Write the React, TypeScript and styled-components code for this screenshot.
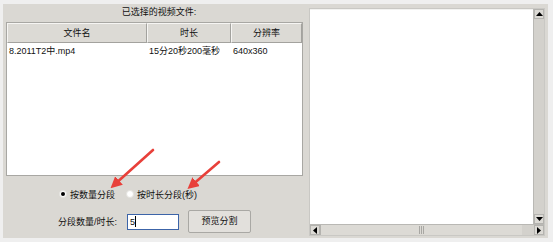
import React from "react";
import styled, { createGlobalStyle } from "styled-components";

const GlobalStyle = createGlobalStyle`
  html, body {
    margin: 0;
    padding: 0;
    background: #efefef;
    font-family: "Liberation Sans", "Noto Sans CJK SC", sans-serif;
    font-size: 9px;
    color: #111;
  }
`;

const files = [{ name: "8.2011T2中.mp4", duration: "15分20秒200毫秒", size: "640x360" }];

const columns = [
  { title: "文件名", width: 140 },
  { title: "时长", width: 84 },
  { title: "分辨率", width: 71 },
];

const App = () => {
  return (
    <Page>
      <GlobalStyle />
      <Panel>
        <LeftColumn>
          <Title>已选择的视频文件:</Title>
          <TableBox>
            <HeaderRow>
              {columns.map((c) => (
                <HeaderCell key={c.title} style={{ width: c.width }}>
                  {c.title}
                </HeaderCell>
              ))}
            </HeaderRow>
            {files.map((f) => (
              <DataRow key={f.name}>
                <DataCell style={{ width: columns[0].width }}>{f.name}</DataCell>
                <DataCell style={{ width: columns[1].width }}>{f.duration}</DataCell>
                <DataCell style={{ width: columns[2].width }}>{f.size}</DataCell>
              </DataRow>
            ))}
          </TableBox>
          <RadioRow>
            <RadioLabel>
              <Radio checked />
              按数量分段
            </RadioLabel>
            <RadioLabel>
              <Radio />
              按时长分段(秒)
            </RadioLabel>
          </RadioRow>
          <InputRow>
            <FieldLabel>分段数量/时长:</FieldLabel>
            <Input>5</Input>
            <Button>预览分割</Button>
          </InputRow>
          <Arrows width="300" height="242" viewBox="0 0 300 242">
            <defs>
              <marker id="head" markerWidth="4.4" markerHeight="4.4" refX="2.6" refY="2.2" orient="auto">
                <path d="M0,0 L4.4,2.2 L0,4.4 Z" fill="#e8403a" />
              </marker>
            </defs>
            <line x1="153" y1="150" x2="114" y2="185" stroke="#e8403a" strokeWidth="2.6" strokeLinecap="round" markerEnd="url(#head)" />
            <line x1="219" y1="162" x2="191" y2="186" stroke="#e8403a" strokeWidth="2.6" strokeLinecap="round" markerEnd="url(#head)" />
          </Arrows>
        </LeftColumn>
        <RightColumn>
          <ScrollPane>
            <ViewRow>
              <TextArea />
              <VBar>
                <ArrowBtn>
                  <svg width="7" height="4" viewBox="0 0 7 4"><path d="M3.5 0 L7 4 L0 4 Z" fill="#000" /></svg>
                </ArrowBtn>
                <Track />
                <ArrowBtn>
                  <svg width="7" height="4" viewBox="0 0 7 4"><path d="M0 0 L7 0 L3.5 4 Z" fill="#000" /></svg>
                </ArrowBtn>
              </VBar>
            </ViewRow>
            <HBar>
              <ArrowBtn>
                <svg width="4" height="7" viewBox="0 0 4 7"><path d="M4 0 L4 7 L0 3.5 Z" fill="#000" /></svg>
              </ArrowBtn>
              <Thumb>
                <Grip />
              </Thumb>
              <ArrowBtn>
                <svg width="4" height="7" viewBox="0 0 4 7"><path d="M0 0 L4 3.5 L0 7 Z" fill="#000" /></svg>
              </ArrowBtn>
            </HBar>
          </ScrollPane>
        </RightColumn>
      </Panel>
    </Page>
  );
};

export default App;

const Page = styled.div`
  width: 553px;
  height: 242px;
  box-sizing: border-box;
  padding: 4px 5px 4px 3px;
  background: #efefef;
`;

const Panel = styled.div`
  display: flex;
  height: 100%;
  background: #dad8d3;
`;

const LeftColumn = styled.div`
  position: relative;
  flex: 0 0 303px;
  padding-left: 3px;
  display: flex;
  flex-direction: column;
  box-sizing: border-box;
`;

const Title = styled.div`
  height: 18px;
  line-height: 17px;
  text-align: center;
  padding-left: 6px;
`;

const TableBox = styled.div`
  width: 297px;
  height: 154px;
  box-sizing: border-box;
  border: 1px solid #a8a7a3;
  background: #fff;
`;

const HeaderRow = styled.div`
  display: flex;
  height: 20px;
  background: #dcdad5;
`;

const HeaderCell = styled.div`
  box-sizing: border-box;
  text-align: center;
  line-height: 18px;
  border: 1px solid #f6f5f3;
  border-right-color: #a3a29e;
  border-bottom-color: #a3a29e;
`;

const DataRow = styled.div`
  display: flex;
  height: 16px;
  line-height: 17px;
`;

const DataCell = styled.div`
  box-sizing: border-box;
  padding-left: 2px;
  white-space: nowrap;
`;

const RadioRow = styled.div`
  display: flex;
  gap: 11px;
  padding-left: 53px;
  margin-top: 11px;
  height: 14px;
  align-items: center;
`;

const RadioLabel = styled.div`
  display: flex;
  align-items: center;
  gap: 3px;
  white-space: nowrap;
`;

const Radio = styled.span<{ checked?: boolean }>`
  width: 8px;
  height: 8px;
  border-radius: 50%;
  background: #fff;
  border: 1px solid #e4e3df;
  box-sizing: border-box;
  display: inline-flex;
  align-items: center;
  justify-content: center;
  &::after {
    content: "";
    width: 4px;
    height: 4px;
    border-radius: 50%;
    background: ${(p) => (p.checked ? "#000" : "transparent")};
  }
`;

const InputRow = styled.div`
  display: flex;
  align-items: center;
  margin-top: 9px;
  padding-left: 52px;
`;

const FieldLabel = styled.div`
  width: 69px;
  white-space: nowrap;
`;

const Input = styled.div`
  width: 52px;
  height: 16px;
  box-sizing: border-box;
  border: 1px solid #3c64a8;
  background: #fff;
  line-height: 14px;
  padding-left: 2px;
  margin-right: 9px;
  &::after {
    content: "";
    display: inline-block;
    width: 1px;
    height: 11px;
    background: #000;
    vertical-align: -2px;
  }
`;

const Button = styled.div`
  width: 63px;
  height: 23px;
  box-sizing: border-box;
  border: 1px solid #a9a8a4;
  border-radius: 2px;
  background: #e2e0dc;
  line-height: 21px;
  text-align: center;
`;

const Arrows = styled.svg`
  position: absolute;
  left: -3px;
  top: -4px;
  pointer-events: none;
`;

const RightColumn = styled.div`
  flex: 1;
  min-width: 0;
  padding: 4px 3px 2px 3px;
  display: flex;
`;

const ScrollPane = styled.div`
  flex: 1;
  min-width: 0;
  display: flex;
  flex-direction: column;
  border: 1px solid #c9c8c4;
`;

const ViewRow = styled.div`
  flex: 1;
  display: flex;
  min-height: 0;
`;

const TextArea = styled.div`
  flex: 1;
  min-width: 0;
  background: #fff;
  border-top: 1px solid #f2f2f0;
`;

const VBar = styled.div`
  flex: 0 0 10px;
  width: 10px;
  display: flex;
  flex-direction: column;
  background: #d3d1cc;
  border-left: 1px solid #b9b8b4;
`;

const ArrowBtn = styled.div`
  flex: 0 0 10px;
  width: 10px;
  height: 10px;
  display: flex;
  align-items: center;
  justify-content: center;
  background: #dcdad5;
  border: 1px solid #b4b3af;
  box-sizing: border-box;
`;

const Track = styled.div`
  flex: 1;
  background: #d3d1cc;
`;

const HBar = styled.div`
  height: 10px;
  flex: 0 0 10px;
  display: flex;
  background: #d3d1cc;
  border-top: 1px solid #b9b8b4;
`;

const Thumb = styled.div`
  flex: 1;
  display: flex;
  justify-content: center;
  align-items: center;
  background: #dcdad5;
  border-left: 1px solid #b4b3af;
  border-right: 12px solid #d3d1cc;
`;

const Grip = styled.div`
  width: 5px;
  height: 8px;
  border-left: 1px solid #a8a7a3;
  border-right: 1px solid #a8a7a3;
  box-sizing: border-box;
  background: linear-gradient(#a8a7a3, #a8a7a3) center / 1px 100% no-repeat;
`;
